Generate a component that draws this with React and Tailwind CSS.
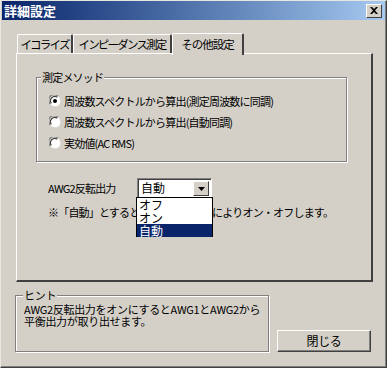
import React from 'react'

const font = { fontFamily: '"Noto Sans CJK JP", "Liberation Sans", sans-serif' }

// Windows classic radio button
const Radio = ({ checked }) => (
	<svg width="12" height="12" viewBox="0 0 12 12" className="shrink-0">
		<circle cx="6" cy="6" r="5.5" fill="#fff" />
		<path d="M1.2 9 A5.5 5.5 0 0 1 9 1.2" stroke="#808080" strokeWidth="1.2" fill="none" />
		<path d="M2.3 8.3 A4.3 4.3 0 0 1 8.3 2.3" stroke="#404040" strokeWidth="1.2" fill="none" />
		<path d="M10.8 3 A5.5 5.5 0 0 1 3 10.8" stroke="#d4d0c8" strokeWidth="1.2" fill="none" />
		{checked && <circle cx="6" cy="6" r="2" fill="#000" />}
	</svg>
)

const Tab = ({ label, active, width }) => (
	<div
		className={
			(active
				? 'relative z-10 -mb-[2px] h-[22px] -mx-[2px] pt-[2px] tracking-[-1px] '
				: 'h-[19px] mt-[2px] pt-[1px] tracking-[-1.8px] ') +
			width +
			' bg-[#d4d0c8] border-t border-l border-white border-r-2 border-r-[#404040] rounded-t-[2px] flex justify-center items-start text-[11.5px] leading-[16px] whitespace-nowrap text-black'
		}
	>
		{label}
	</div>
)

const App = () => {
	return (
		<div style={font} className="w-[387px] h-[368px] bg-[#d4d0c8] relative overflow-hidden border-t border-l border-[#e8e6e0] border-r border-b border-r-[#404040] border-b-[#404040] shadow-[inset_-1px_-1px_0_#808080]">
			{/* タイトルバー */}
			<div className="h-[19px] ml-[1px] mr-[1px] flex items-center justify-between pl-[2px] pr-[3px] bg-gradient-to-r from-[#0a246a] to-[#a6caf0]">
				<span className="text-white font-bold text-[13px] leading-none">詳細設定</span>
				<div className="w-[16px] h-[14px] bg-[#d4d0c8] border-t border-l border-white border-r border-b border-r-[#404040] border-b-[#404040] flex items-center justify-center">
					<svg width="8" height="7" viewBox="0 0 8 7">
						<path d="M0 0 L2 0 L4 2 L6 0 L8 0 L5 3.5 L8 7 L6 7 L4 5 L2 7 L0 7 L3 3.5 Z" fill="#000" />
					</svg>
				</div>
			</div>

			{/* タブ */}
			<div className="pl-[16px] pt-[13px] flex items-end h-[33px]">
				<Tab label="イコライズ" width="w-[56px]" />
				<Tab label="インピーダンス測定" width="w-[99px]" />
				<div className="w-[2px]" />
				<Tab label="その他設定" width="w-[72px]" active />
			</div>

			<div className="ml-[15px] w-[357px] h-[229px] border-t border-l border-white border-r-2 border-b-2 border-r-[#404040] border-b-[#404040] pt-[23px] pl-[19px] text-[11px] tracking-[-0.8px] leading-[16px] whitespace-nowrap">
				{/* 測定メソッド */}
				<div className="relative w-[311px] h-[85px] border border-[#808080] shadow-[1px_1px_0_#fff,inset_1px_1px_0_#fff]">
					<span className="absolute -top-[9px] left-[4px] px-[1px] bg-[#d4d0c8]">測定メソッド</span>
					<div className="pt-[15px] pl-[12px] flex flex-col gap-[5px]">
						<div className="flex items-center gap-[3px]">
							<Radio checked />
							<span>周波数スペクトルから算出(測定周波数に同調)</span>
						</div>
						<div className="flex items-center gap-[3px]">
							<Radio />
							<span>周波数スペクトルから算出(自動同調)</span>
						</div>
						<div className="flex items-center gap-[3px]">
							<Radio />
							<span>実効値(AC RMS)</span>
						</div>
					</div>
				</div>

				{/* AWG2反転出力 */}
				<div className="mt-[16px] pl-[12px] flex items-center">
					<span className="w-[89px]">AWG2反転出力</span>
					<div className="relative w-[75px] h-[20px] bg-white border-t border-l border-[#808080] border-r border-b border-r-white border-b-white shadow-[inset_1px_1px_0_#404040] flex items-center text-[12px] tracking-normal">
						<span className="pl-[3px]">自動</span>
						<div className="absolute right-[2px] top-[2px] w-[16px] h-[15px] bg-[#d4d0c8] border-t border-l border-white border-r border-b border-r-[#404040] border-b-[#404040] flex items-center justify-center">
							<svg width="7" height="4" viewBox="0 0 7 4">
								<path d="M0 0 L7 0 L3.5 4 Z" fill="#000" />
							</svg>
						</div>
						{/* ドロップダウンリスト */}
						<div className="absolute left-[-2px] top-[18px] z-20 w-[77px] h-[40px] bg-white border border-black flex flex-col text-[12px] leading-[13px]">
							<div className="px-[2px] h-[13px]">オフ</div>
							<div className="px-[2px] h-[13px]">オン</div>
							<div className="px-[2px] h-[13px] bg-[#0a246a] text-white">自動</div>
						</div>
					</div>
				</div>

				<div className="mt-[6px] pl-[12px] tracking-[-0.8px]">※「自動」とすると、外部同期信号 によりオン・オフします。</div>
			</div>

			{/* ヒント + 閉じる */}
			<div className="mt-[13px] pl-[14px] flex items-end text-[11px] tracking-[-0.3px] whitespace-nowrap">
				<div className="relative w-[254px] h-[57px] border border-[#808080] shadow-[1px_1px_0_#fff,inset_1px_1px_0_#fff]">
					<span className="absolute -top-[9px] left-[7px] px-[1px] bg-[#d4d0c8] leading-[16px]">ヒント</span>
					<div className="pt-[7px] pl-[8px] leading-[12px]">
						AWG2反転出力をオンにするとAWG1とAWG2から
						<br />
						平衡出力が取り出せます。
					</div>
				</div>
				<button className="ml-[8px] w-[94px] h-[22px] bg-[#d4d0c8] border-t border-l border-white border-r border-b border-r-[#404040] border-b-[#404040] shadow-[inset_-1px_-1px_0_#808080] text-[12px] flex items-center justify-center">
					閉じる
				</button>
			</div>
		</div>
	)
}

export default App
